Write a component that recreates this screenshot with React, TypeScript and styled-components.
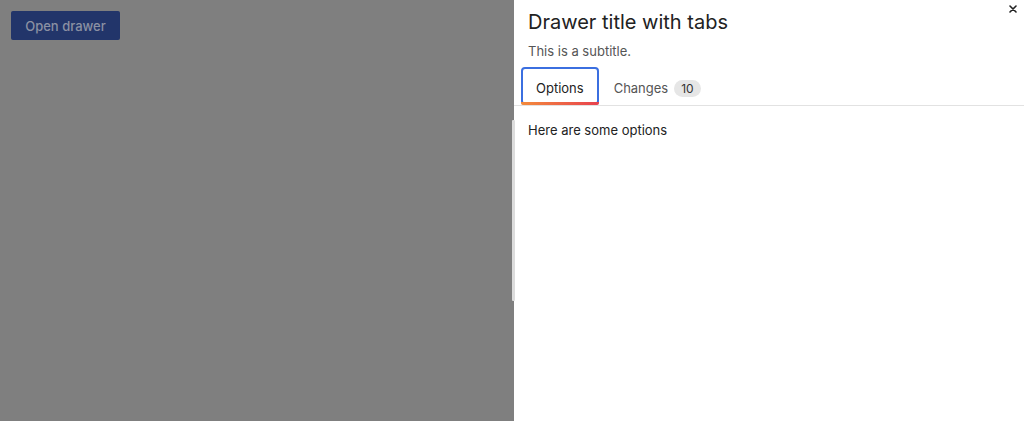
import React from "react";
import styled, { createGlobalStyle } from "styled-components";

const Global = createGlobalStyle`
  html, body { margin: 0; padding: 0; background: #ffffff; }
  body { font-family: Inter, "Noto Sans", sans-serif; color: #222; }
  * { box-sizing: border-box; }
`;

const Page = styled.div`
  padding: 11px;
`;

const PrimaryButton = styled.button`
  position: relative;
  z-index: 1;
  height: 29px;
  width: 109px;
  border: none;
  border-radius: 2px;
  background: #22356a;
  color: #8b91a3;
  font-family: Inter, sans-serif;
  font-size: 13px;
  font-weight: 500;
  padding: 0;
  cursor: pointer;
`;

const Overlay = styled.div`
  position: fixed;
  inset: 0;
  background: rgba(0, 0, 0, 0.5);
`;

const Drawer = styled.aside`
  position: fixed;
  top: 0;
  right: 0;
  bottom: 0;
  width: 510px;
  background: #fff;
  display: flex;
  flex-direction: column;
  z-index: 2;
`;

const ResizeHandle = styled.div`
  position: absolute;
  left: -2px;
  top: 120px;
  width: 3px;
  height: 181px;
  background: #dcdcdc;
  border-radius: 1px;
`;

const CloseButton = styled.button`
  position: absolute;
  top: 3px;
  right: 5px;
  width: 12px;
  height: 12px;
  border: none;
  background: transparent;
  padding: 0;
  display: flex;
  align-items: center;
  justify-content: center;
  cursor: pointer;
`;

const Header = styled.div`
  padding: 8px 14px 0 14px;
`;

const Title = styled.h2`
  margin: 0;
  font-size: 20px;
  font-weight: 400;
  line-height: 28px;
  color: #222;
`;

const Subtitle = styled.p`
  margin: 6px 0 0 0;
  font-size: 13px;
  line-height: 18px;
  color: #555;
`;

const TabList = styled.div`
  display: flex;
  margin-top: 7px;
  padding-left: 7px;
  border-bottom: 1px solid #e2e2e2;
`;

const Tab = styled.button<{ $active?: boolean }>`
  position: relative;
  height: 38px;
  padding: 4px 13px 0 13px;
  display: flex;
  align-items: center;
  gap: 6px;
  border: 2px solid ${(p) => (p.$active ? "#3b6fe0" : "transparent")};
  border-radius: 4px;
  background: transparent;
  font-family: Inter, sans-serif;
  font-size: 13px;
  color: ${(p) => (p.$active ? "#222" : "#555")};
  cursor: pointer;
  &::after {
    content: "";
    display: ${(p) => (p.$active ? "block" : "none")};
    position: absolute;
    left: -2px;
    right: -2px;
    bottom: -2px;
    height: 3px;
    background: linear-gradient(90deg, #f38b3c, #e8414e);
    border-radius: 0 0 2px 2px;
  }
`;

const Count = styled.span`
  display: inline-flex;
  align-items: center;
  justify-content: center;
  height: 17px;
  padding: 0 7px;
  border-radius: 9px;
  background: #e6e6e6;
  color: #333;
  font-size: 12px;
`;

const Body = styled.div`
  padding: 16px 14px;
  font-size: 13px;
  color: #222;
`;

export default function App() {
  return (
    <>
      <Global />
      <Page>
        <PrimaryButton>Open drawer</PrimaryButton>
      </Page>
      <Overlay />
      <Drawer>
        <ResizeHandle />
        <CloseButton aria-label="Close">
          <svg width="8" height="8" viewBox="0 0 8 8">
            <path d="M1 1 L7 7 M7 1 L1 7" stroke="#222" strokeWidth="1.6" strokeLinecap="round" />
          </svg>
        </CloseButton>
        <Header>
          <Title>Drawer title with tabs</Title>
          <Subtitle>This is a subtitle.</Subtitle>
        </Header>
        <TabList>
          <Tab $active>Options</Tab>
          <Tab>
            Changes <Count>10</Count>
          </Tab>
        </TabList>
        <Body>Here are some options</Body>
      </Drawer>
    </>
  );
}
